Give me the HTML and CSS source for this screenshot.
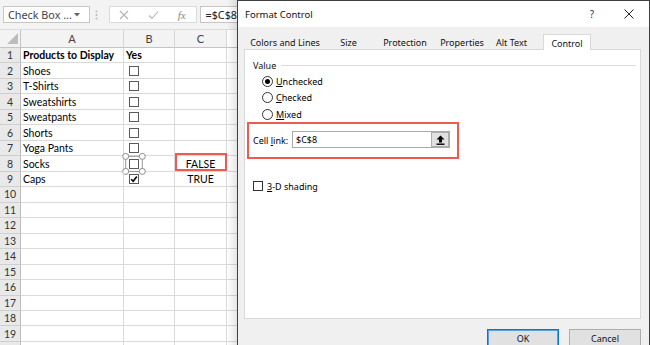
FILE: index.html
```html
<!DOCTYPE html>
<html>
<head>
<meta charset="utf-8">
<title>Format Control</title>
<link rel="stylesheet" href="styles.css">
</head>
<body>
<div class="screen">
  <section class="excel">
    <div class="fbar">
      <div class="namebox"><span>Check Box ...</span><svg class="caret" width="6" height="4" viewBox="0 0 6 4"><path d="M0 0H6L3 3.5Z" fill="#666"/></svg></div>
      <svg class="grip" width="3" height="10" viewBox="0 0 3 10"><circle cx="1.5" cy="1.5" r="1" fill="#b8b8b8"/><circle cx="1.5" cy="5" r="1" fill="#b8b8b8"/><circle cx="1.5" cy="8.5" r="1" fill="#b8b8b8"/></svg>
      <div class="fbtns">
        <svg width="10" height="10" viewBox="0 0 10 10"><path d="M1 1L9 9M9 1L1 9" stroke="#b4b4b4" stroke-width="1.1" fill="none"/></svg>
        <svg width="11" height="10" viewBox="0 0 11 10"><path d="M1 5.5L4 8.5L10 1.5" stroke="#b4b4b4" stroke-width="1.1" fill="none"/></svg>
        <span class="fx">fx</span>
      </div>
      <div class="formula">=$C$8</div>
    </div>
    <div class="sheet">
      <div class="corner"><svg width="11" height="11" viewBox="0 0 11 11"><path d="M11 0V11H0Z" fill="#bdbdbd"/></svg></div>
      <div class="ch">A</div><div class="ch">B</div><div class="ch">C</div><div class="ch d"></div>

      <div class="rh">1</div><div class="c b">Products to Display</div><div class="c b">Yes</div><div class="c"></div><div class="c d"></div>
      <div class="rh">2</div><div class="c">Shoes</div><div class="c box"><span class="cb"></span></div><div class="c"></div><div class="c d"></div>
      <div class="rh">3</div><div class="c">T-Shirts</div><div class="c box"><span class="cb"></span></div><div class="c"></div><div class="c d"></div>
      <div class="rh">4</div><div class="c">Sweatshirts</div><div class="c box"><span class="cb"></span></div><div class="c"></div><div class="c d"></div>
      <div class="rh">5</div><div class="c">Sweatpants</div><div class="c box"><span class="cb"></span></div><div class="c"></div><div class="c d"></div>
      <div class="rh">6</div><div class="c">Shorts</div><div class="c box"><span class="cb"></span></div><div class="c"></div><div class="c d"></div>
      <div class="rh">7</div><div class="c">Yoga Pants</div><div class="c box"><span class="cb"></span></div><div class="c"></div><div class="c d"></div>
      <div class="rh">8</div><div class="c">Socks</div><div class="c box"><span class="cb"></span>
        <svg class="handles" width="24" height="22" viewBox="0 0 24 22"><rect x="3.7" y="3.4" width="16.6" height="15" fill="none" stroke="#9a9a9a" stroke-width="1"/><g fill="#fff" stroke="#8a8a8a" stroke-width="1"><circle cx="3.7" cy="3.4" r="3"/><circle cx="20.3" cy="3.4" r="3"/><circle cx="3.7" cy="18.4" r="3"/><circle cx="20.3" cy="18.4" r="3"/></g></svg>
      </div><div class="c mid">FALSE<span class="hl"></span></div><div class="c d"></div>
      <div class="rh">9</div><div class="c">Caps</div><div class="c box"><span class="cb on"><svg width="8" height="8" viewBox="0 0 8 8"><path d="M1.2 4.2L3.2 6.2L6.8 1.6" stroke="#000" stroke-width="1.6" fill="none"/></svg></span></div><div class="c mid">TRUE</div><div class="c d"></div>
      <div class="rh">10</div><div class="c"></div><div class="c"></div><div class="c"></div><div class="c d"></div>
      <div class="rh">11</div><div class="c"></div><div class="c"></div><div class="c"></div><div class="c d"></div>
      <div class="rh">12</div><div class="c"></div><div class="c"></div><div class="c"></div><div class="c d"></div>
      <div class="rh">13</div><div class="c"></div><div class="c"></div><div class="c"></div><div class="c d"></div>
      <div class="rh">14</div><div class="c"></div><div class="c"></div><div class="c"></div><div class="c d"></div>
      <div class="rh">15</div><div class="c"></div><div class="c"></div><div class="c"></div><div class="c d"></div>
      <div class="rh">16</div><div class="c"></div><div class="c"></div><div class="c"></div><div class="c d"></div>
      <div class="rh">17</div><div class="c"></div><div class="c"></div><div class="c"></div><div class="c d"></div>
      <div class="rh">18</div><div class="c"></div><div class="c"></div><div class="c"></div><div class="c d"></div>
      <div class="rh">19</div><div class="c"></div><div class="c"></div><div class="c"></div><div class="c d"></div>
      <div class="rh"></div><div class="c"></div><div class="c"></div><div class="c"></div><div class="c d"></div>
    </div>
  </section>

  <section class="dialog">
    <header class="title">
      <span class="name">Format Control</span>
      <span class="help">?</span>
      <svg class="close" width="10" height="10" viewBox="0 0 10 10"><path d="M0.5 0.5L9.5 9.5M9.5 0.5L0.5 9.5" stroke="#222" stroke-width="1" fill="none"/></svg>
    </header>
    <div class="dbody">
      <nav class="tabs">
        <span class="tab t1">Colors and Lines</span>
        <span class="tab t2">Size</span>
        <span class="tab t3">Protection</span>
        <span class="tab t4">Properties</span>
        <span class="tab t5">Alt Text</span>
        <span class="tab active">Control</span>
      </nav>
      <div class="panel">
        <div class="group"><span>Value</span><span class="gline"></span></div>
        <div class="radios">
          <div class="radio"><span class="rb on"></span><span><u>U</u>nchecked</span></div>
          <div class="radio"><span class="rb"></span><span><u>C</u>hecked</span></div>
          <div class="radio"><span class="rb"></span><span><u>M</u>ixed</span></div>
        </div>
        <div class="linkbox">
          <span class="llabel">Cell <u>l</u>ink:</span>
          <div class="input">
            <span class="val">$C$8</span>
            <span class="pick"><svg width="9" height="10" viewBox="0 0 9 10"><path d="M4.5 0.5L8.5 4.5H6V7.5H3V4.5H0.5Z" fill="#000"/><rect x="0.5" y="8.5" width="8" height="1.4" fill="#000"/></svg></span>
          </div>
        </div>
        <div class="shade"><span class="chk"></span><span><u>3</u>-D shading</span></div>
      </div>
      <div class="btns">
        <span class="btn ok">OK</span>
        <span class="btn">Cancel</span>
      </div>
    </div>
  </section>
</div>
</body>
</html>
```

FILE: styles.css
```css
* { box-sizing: border-box; margin: 0; padding: 0; }
html, body { width: 650px; height: 345px; overflow: hidden; background: #fff; }
body { font-family: "Noto Sans", sans-serif; color: #000; }

.screen { display: flex; width: 650px; height: 345px; }

/* ---------- Excel side ---------- */
.excel {
  position: relative;
  width: 237px;
  flex: none;
  display: flex;
  flex-direction: column;
  overflow: hidden;
  font-family: Lato, "Liberation Sans", sans-serif;
}
.excel::after {
  content: "";
  position: absolute;
  top: 0; right: 0; bottom: 0;
  width: 10px;
  background: linear-gradient(to right, rgba(0,0,0,0), rgba(0,0,0,0.1));
}

.fbar {
  height: 30px;
  flex: none;
  background: #f3f3f3;
  display: flex;
  align-items: center;
  padding-left: 3px;
  border-bottom: 1px solid #dcdcdc;
}
.namebox {
  width: 87px;
  height: 17px;
  background: #fff;
  border: 1px solid #c6c6c6;
  display: flex;
  align-items: center;
  justify-content: space-between;
  padding: 0 9px 0 4px;
  font-family: "Noto Sans", sans-serif;
  font-size: 10.8px;
  color: #444;
  white-space: nowrap;
}
.grip { margin-left: 5px; margin-right: 11px; }
.fbtns {
  width: 89px;
  height: 17px;
  background: #fff;
  border: 1px solid #dadada;
  display: flex;
  align-items: center;
  padding-left: 9px;
  gap: 19px;
}
.fx {
  font-family: "Liberation Serif", serif;
  font-style: italic;
  font-size: 11px;
  color: #888;
}
.formula {
  flex: 1;
  height: 17px;
  margin-left: 3px;
  background: #fff;
  border: 1px solid #c6c6c6;
  border-right: none;
  padding-left: 4px;
  font-family: "Noto Sans", sans-serif;
  font-size: 10.8px;
  line-height: 15px;
  color: #222;
  white-space: nowrap;
}

.sheet {
  display: grid;
  grid-template-columns: 21px 103px 51px 52px 10px;
  grid-template-rows: 18px;
  grid-auto-rows: 15.47px;
  font-size: 10.5px;
}
.corner {
  background: #f3f3f3;
  border-right: 1px solid #c4c4c4;
  border-bottom: 1px solid #c4c4c4;
  display: flex;
  align-items: flex-end;
  justify-content: flex-end;
  padding: 0 2px 3px 0;
}
.ch {
  background: #f3f3f3;
  border-right: 1px solid #d6d6d6;
  border-bottom: 1px solid #c4c4c4;
  display: flex;
  align-items: center;
  justify-content: center;
  color: #444;
  font-size: 11px;
}
.rh {
  background: #e9e9e9;
  border-right: 1px solid #bdbdbd;
  border-bottom: 1px solid #cfcfcf;
  display: flex;
  align-items: center;
  justify-content: center;
  color: #333;
  font-size: 10.5px;
}
.c {
  position: relative;
  border-right: 1px solid #dadada;
  border-bottom: 1px solid #dadada;
  display: flex;
  align-items: center;
  padding-left: 2px;
  white-space: nowrap;
}
.c.b { font-weight: 700; }
.c.mid { justify-content: center; padding-left: 0; }
.c.box { padding-left: 5px; }
.d { background: #fff; border-right: none; }

.cb {
  width: 10px;
  height: 10px;
  border: 1px solid #5a5a5a;
  background: #fff;
  display: flex;
  align-items: center;
  justify-content: center;
}
.handles {
  position: absolute;
  left: -2px;
  top: -3px;
  overflow: visible;
}
.hl {
  position: absolute;
  left: 0; top: -3px; right: -1px; bottom: 0;
  border: 2px solid #ef5a50;
}

/* ---------- Dialog ---------- */
.dialog {
  flex: 1;
  display: flex;
  flex-direction: column;
  border: 1px solid #3f3f3f;
  border-bottom: none;
  background: #f0f0f0;
  font-size: 9px;
  color: #000;
}
.title {
  height: 26px;
  flex: none;
  background: #fff;
  display: flex;
  align-items: center;
  padding-left: 7px;
  padding-right: 15px;
}
.title .name { flex: 1; font-size: 9.5px; color: #111; }
.help { font-size: 10px; color: #333; margin-right: 30px; }

.dbody {
  flex: 1;
  display: flex;
  flex-direction: column;
  padding: 7px 8px 0 6px;
}
.tabs {
  display: flex;
  align-items: flex-end;
  height: 15px;
  padding-left: 6px;
}
.tab {
  height: 15px;
  display: flex;
  align-items: center;
  justify-content: center;
  padding-top: 2px;
  white-space: nowrap;
  color: #111;
}
.t1 { width: 70px; }
.t2 { width: 57px; }
.t3 { width: 56px; }
.t4 { width: 58px; }
.t5 { width: 41px; }
.tab.active {
  width: 48px;
  margin-left: 11px;
  background: #fff;
  border: 1px solid #d9d9d9;
  border-bottom: none;
  position: relative;
  z-index: 1;
  height: 16px;
  margin-bottom: -1px;
}

.panel {
  height: 270px;
  flex: none;
  background: #fff;
  border: 1px solid #d9d9d9;
  display: flex;
  flex-direction: column;
}
.group {
  display: flex;
  align-items: center;
  height: 12px;
  margin-top: 9px;
  padding-left: 8px;
  padding-right: 4px;
  color: #111;
}
.gline { flex: 1; height: 1px; background: #dcdcdc; margin-left: 5px; }

.radios { display: flex; flex-direction: column; margin-top: 2px; padding-left: 17px; }
.radio { height: 16.5px; display: flex; align-items: center; gap: 3px; }
.rb {
  width: 11px;
  height: 11px;
  border-radius: 50%;
  border: 1px solid #333;
  background: #fff;
  display: flex;
  align-items: center;
  justify-content: center;
}
.rb.on::after {
  content: "";
  width: 5px;
  height: 5px;
  border-radius: 50%;
  background: #000;
}

.linkbox {
  width: 212px;
  height: 37px;
  margin-left: 2px;
  margin-top: -1px;
  border: 2px solid #ef5a50;
  display: flex;
  align-items: center;
  padding-left: 4px;
}
.llabel { width: 39px; flex: none; }
.input {
  width: 158px;
  height: 17px;
  border: 1px solid #a9a9a9;
  display: flex;
  align-items: center;
  justify-content: space-between;
  padding: 0 0 0 3px;
  margin-top: -1px;
}
.pick {
  width: 18px;
  height: 15px;
  background: #e1e1e1;
  border: 1px solid #adadad;
  display: flex;
  align-items: center;
  justify-content: center;
}

.shade {
  display: flex;
  align-items: center;
  gap: 4px;
  margin-top: 21px;
  padding-left: 8px;
}
.chk { width: 10px; height: 10px; border: 1px solid #333; background: #fff; }

.btns {
  display: flex;
  justify-content: flex-end;
  gap: 10px;
  margin-top: 10px;
}
.btn {
  width: 72px;
  height: 18px;
  background: #e1e1e1;
  border: 1px solid #adadad;
  display: flex;
  align-items: center;
  justify-content: center;
  color: #111;
}
.btn.ok { border: 1px solid #0078d7; box-shadow: inset 0 0 0 1px #5aa0e0; }
```
